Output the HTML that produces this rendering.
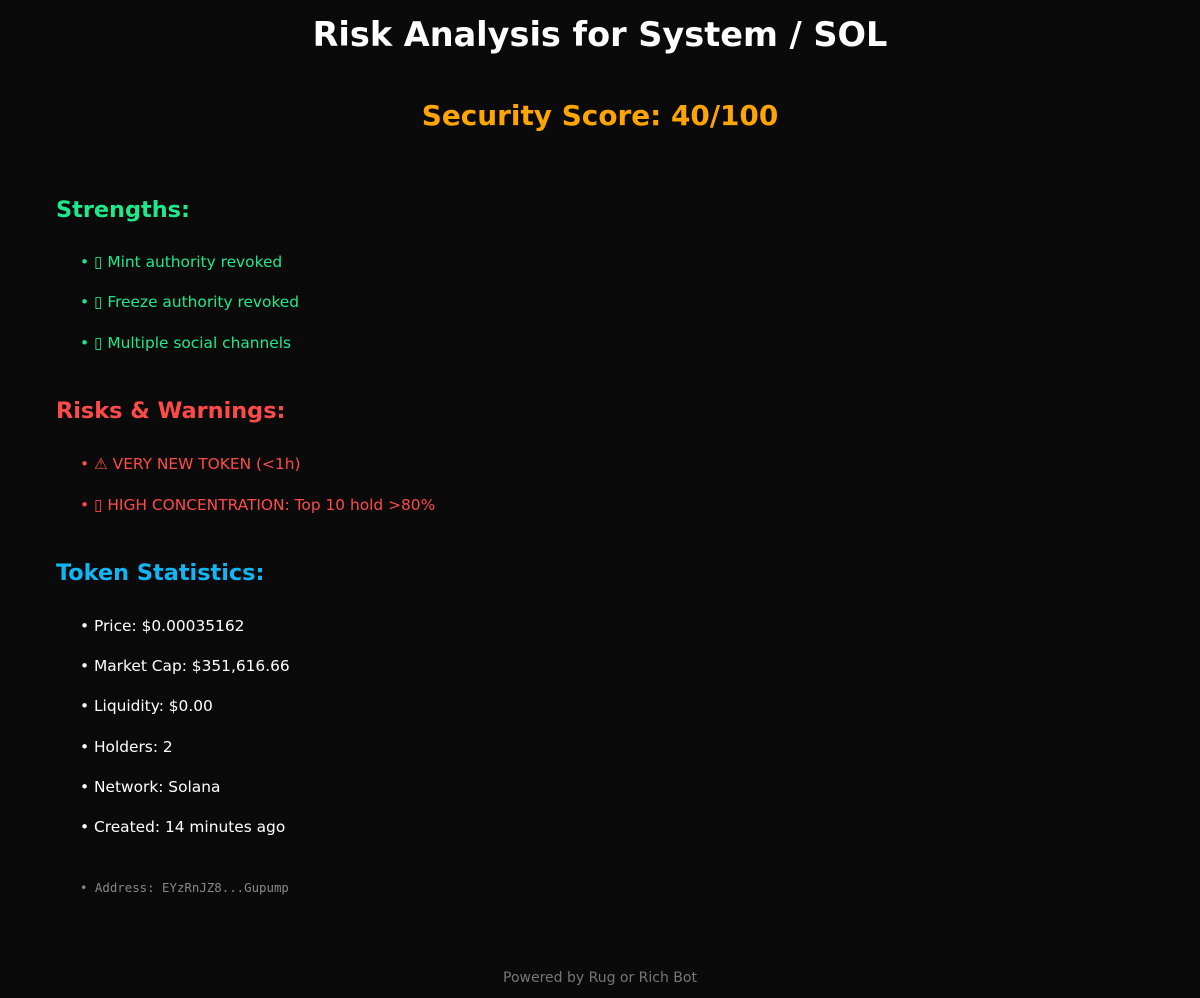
<!DOCTYPE html>
<html><head><meta charset="utf-8"><style>
html,body{margin:0;padding:0;background:#0a0a0a;}
body{width:1200px;height:998px;position:relative;overflow:hidden;font-family:"DejaVu Sans","Liberation Sans",sans-serif;}
div{position:absolute;line-height:1;white-space:nowrap;}
.c{left:0;width:1200px;text-align:center;}
.h{left:56px;font-size:22.4px;font-weight:bold;}
.i{left:80px;font-size:15.4px;}
.g{color:#1de98b}.r{color:#ff4a4a}.w{color:#fff}
</style></head><body>
<div class="c" style="top:18px;font-size:33.5px;font-weight:bold;color:#fff">Risk Analysis for System / SOL</div>
<div class="c" style="top:102px;font-size:27.9px;font-weight:bold;color:#ffa500">Security Score: 40/100</div>
<div class="h g" style="top:199px">Strengths:</div>
<div class="i g" style="top:255px">• ▯ Mint authority revoked</div>
<div class="i g" style="top:295px">• ▯ Freeze authority revoked</div>
<div class="i g" style="top:336px">• ▯ Multiple social channels</div>
<div class="h r" style="top:400px">Risks &amp; Warnings:</div>
<div class="i r" style="top:457px">• ⚠ VERY NEW TOKEN (&lt;1h)</div>
<div class="i r" style="top:498px">• ▯ HIGH CONCENTRATION: Top 10 hold &gt;80%</div>
<div class="h" style="top:562px;color:#12b6f5">Token Statistics:</div>
<div class="i w" style="top:619px">• Price: $0.00035162</div>
<div class="i w" style="top:659px">• Market Cap: $351,616.66</div>
<div class="i w" style="top:699px">• Liquidity: $0.00</div>
<div class="i w" style="top:740px">• Holders: 2</div>
<div class="i w" style="top:780px">• Network: Solana</div>
<div class="i w" style="top:820px">• Created: 14 minutes ago</div>
<div style="left:80px;top:882px;font-size:12.4px;color:#888;font-family:'DejaVu Sans Mono','Liberation Mono',monospace">• Address: EYzRnJZ8...Gupump</div>
<div class="c" style="top:971px;font-size:14px;color:#777">Powered by Rug or Rich Bot</div>
</body></html>
